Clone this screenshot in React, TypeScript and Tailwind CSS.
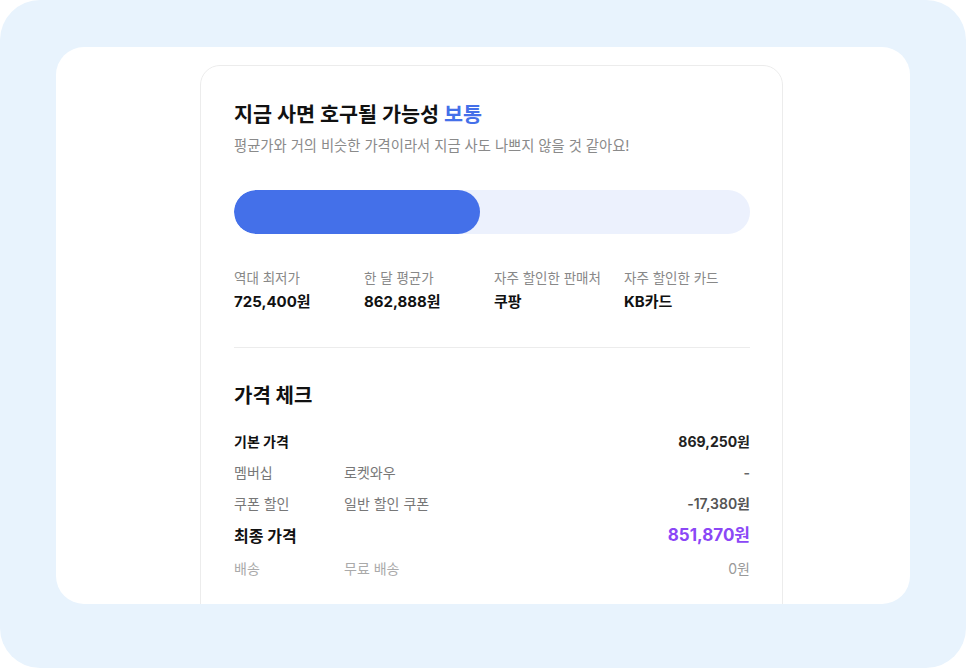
const stats = [
  { label: "역대 최저가", value: "725,400원" },
  { label: "한 달 평균가", value: "862,888원" },
  { label: "자주 할인한 판매처", value: "쿠팡" },
  { label: "자주 할인한 카드", value: "KB카드" },
];

export default function App() {
  const percent = 47.6;

  return (
    <div
      className="w-[966px] h-[668px] bg-white"
      style={{ fontFamily: 'Inter, "Noto Sans CJK KR", "Noto Sans", sans-serif' }}
    >
      <div className="w-full h-full rounded-[40px] bg-[#e8f3fd] pt-[47px] pl-[56px] pr-[56px] pb-[64px] flex">
        <div className="flex-1 bg-white rounded-[28px] overflow-hidden pt-[18px]">
          <div className="ml-[144px] w-[583px] h-[600px] border border-[#ececec] rounded-[20px] pl-[33px] pr-[32px] pt-[35px]">
            {/* Header */}
            <h1 className="text-[20.7px] leading-[28px] font-bold text-[#111]">
              지금 사면 호구될 가능성 <span className="text-[#4470e9]">보통</span>
            </h1>
            <p className="mt-[7px] text-[14.3px] leading-[20px] text-[#8a8a8a]">
              평균가와 거의 비슷한 가격이라서 지금 사도 나쁘지 않을 것 같아요!
            </p>

            {/* Gauge */}
            <div className="mt-[34px] h-[44px] rounded-full bg-[#ecf1fd] overflow-hidden">
              <div className="h-full rounded-full bg-[#4470e9]" style={{ width: `${percent}%` }} />
            </div>

            {/* Stats */}
            <div className="mt-[34px] grid grid-cols-[130px_130px_130px_1fr] pb-[35px] border-b border-[#ececec]">
              {stats.map((s) => (
                <div key={s.label} className="flex flex-col">
                  <span className="text-[13.5px] leading-[20px] text-[#888]">{s.label}</span>
                  <span className="mt-[4px] text-[15px] leading-[20px] font-bold text-[#111]">{s.value}</span>
                </div>
              ))}
            </div>

            {/* Price check */}
            <h2 className="mt-[34px] text-[20px] leading-[28px] font-bold text-[#111]">가격 체크</h2>
            <div className="mt-[16px] flex flex-col">
              <div className="flex items-center h-[31px]">
                <span className="text-[14px] font-bold text-[#111]">기본 가격</span>
                <span className="ml-auto text-[14px] font-bold text-[#222]">869,250원</span>
              </div>
              <div className="flex items-center h-[31px] text-[14px] text-[#777]">
                <span className="w-[110px]">멤버십</span>
                <span>로켓와우</span>
                <span className="ml-auto font-semibold text-[#666]">-</span>
              </div>
              <div className="flex items-center h-[31px] text-[14px] text-[#777]">
                <span className="w-[110px]">쿠폰 할인</span>
                <span>일반 할인 쿠폰</span>
                <span className="ml-auto font-semibold text-[#555]">-17,380원</span>
              </div>
              <div className="flex items-center h-[34px]">
                <span className="text-[16px] font-bold text-[#111]">최종 가격</span>
                <span className="ml-auto text-[17px] font-bold text-[#8b47f6]">851,870원</span>
              </div>
              <div className="flex items-center h-[31px] text-[14px] text-[#aaa]">
                <span className="w-[110px]">배송</span>
                <span>무료 배송</span>
                <span className="ml-auto text-[#999]">0원</span>
              </div>
            </div>
          </div>
        </div>
      </div>
    </div>
  );
}
